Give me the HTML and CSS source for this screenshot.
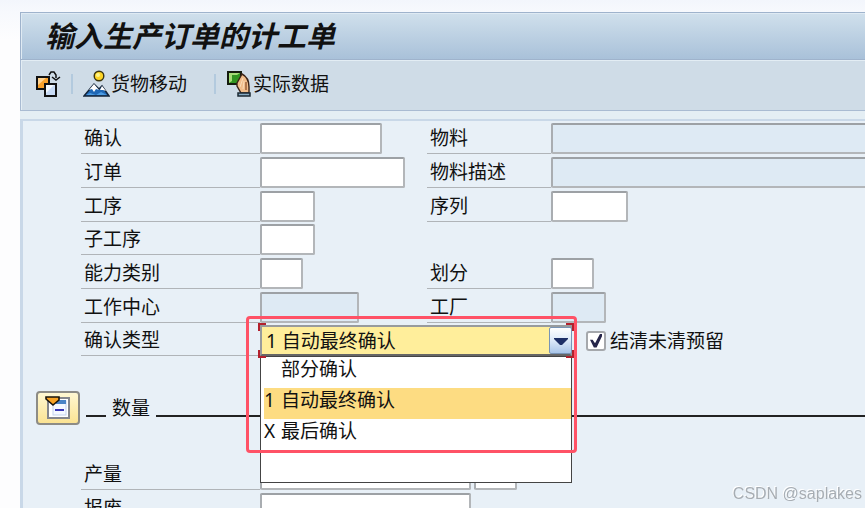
FILE: index.html
```html
<!DOCTYPE html>
<html lang="zh-CN">
<head>
<meta charset="utf-8">
<title>输入生产订单的计工单</title>
<link rel="stylesheet" href="styles.css">
</head>
<body>
<div class="window">
  <header class="titlebar"><h1>输入生产订单的计工单</h1></header>
  <nav class="toolbar" aria-label="工具栏">
    <button type="button" class="tool" aria-label="复制">
      <svg class="icon" width="26" height="28" viewBox="0 0 26 28">
        <rect x="2" y="7" width="12" height="12" fill="#f9a12b" stroke="#111" stroke-width="2"/>
        <path d="M3 8h8L3 15z" fill="#ffd391"/>
        <rect x="10" y="14" width="11" height="12" fill="#c9dcf6" stroke="#111" stroke-width="2"/>
        <path d="M11 15h8l-8 8z" fill="#f6faff"/>
        <path d="M14 5l2-3h3l2 3v3M17 7l4 3 4-3" fill="none" stroke="#111" stroke-width="1.5"/>
      </svg>
    </button>
    <span class="divider"></span>
    <button type="button" class="tool tool-move">
      <svg class="icon" width="27" height="28" viewBox="0 0 27 28">
        <path d="M1 26l10-12 5 5 3-3 7 10z" fill="#1f67b5" stroke="#14253a" stroke-width="1.5"/>
        <path d="M6 20l5-6 5 6-3-1-2 3-2-3zM17 20l2-4 4 5-3-1z" fill="#fff"/>
        <path d="M3 25l4-2 6 2 5-3 6 3z" fill="#4b9be2"/>
        <circle cx="16" cy="6" r="4.8" fill="#fdd426" stroke="#3b3510" stroke-width="1.4"/>
        <circle cx="15" cy="5" r="2" fill="#fff58a"/>
      </svg>
      <span>货物移动</span>
    </button>
    <span class="divider"></span>
    <button type="button" class="tool tool-data">
      <svg class="icon" width="26" height="28" viewBox="0 0 26 28">
        <rect x="2" y="2" width="13" height="12" fill="#319420" stroke="#151c0e" stroke-width="2"/>
        <path d="M3 3h11l-3 2H6v6l-3 2z" fill="#a5dc77"/>
        <path d="M11 13l5-9c4 2 7 7 7 13v6h-8l-4-7z" fill="#f1bd8b" stroke="#3b2316" stroke-width="1.4"/>
        <path d="M14 17l3-9M17 19l1-8" stroke="#fbdcb8" fill="none"/>
        <path d="M20 20v-8" stroke="#9b6038" fill="none" stroke-width="1.5"/>
        <path d="M12 23h12v3H12z" fill="#87abc2" stroke="#1b2933" stroke-width="1.5"/>
      </svg>
      <span>实际数据</span>
    </button>
  </nav>
  <main class="panel">
    <form class="form">
      <label class="caption" for="conf">确认</label>
      <div class="cell"><input class="field w-conf" id="conf" type="text"></div>
      <label class="caption" for="mat">物料</label>
      <div class="cell"><input class="field w-full" id="mat" type="text" readonly></div>

      <label class="caption" for="order">订单</label>
      <div class="cell"><input class="field w-order" id="order" type="text"></div>
      <label class="caption" for="desc">物料描述</label>
      <div class="cell"><input class="field w-full" id="desc" type="text" readonly></div>

      <label class="caption" for="op">工序</label>
      <div class="cell"><input class="field w-op" id="op" type="text"></div>
      <label class="caption" for="seq">序列</label>
      <div class="cell"><input class="field w-seq" id="seq" type="text"></div>

      <label class="caption" for="subop">子工序</label>
      <div class="cell cell-rest"><input class="field w-op" id="subop" type="text"></div>

      <label class="caption" for="cap">能力类别</label>
      <div class="cell"><input class="field w-short" id="cap" type="text"></div>
      <label class="caption" for="split">划分</label>
      <div class="cell"><input class="field w-short" id="split" type="text"></div>

      <label class="caption" for="center">工作中心</label>
      <div class="cell"><input class="field w-center" id="center" type="text" readonly></div>
      <label class="caption" for="plant">工厂</label>
      <div class="cell"><input class="field w-op" id="plant" type="text" readonly></div>

      <label class="caption" for="type">确认类型</label>
      <div class="cell cell-rest">
        <div class="combo">
          <select id="type">
            <option>部分确认</option>
            <option selected>1 自动最终确认</option>
            <option>X 最后确认</option>
          </select>
          <span class="arrow"><svg width="14" height="8" viewBox="0 0 14 8"><path d="M0 1h14v1L8 8H6L0 2z" fill="#1d2f66"/></svg></span>
          <ul class="menu">
            <li><span class="key"></span>部分确认</li>
            <li class="active"><span class="key">1</span>自动最终确认</li>
            <li><span class="key">X</span>最后确认</li>
          </ul>
          <span class="focus"></span>
          <span class="highlight"></span>
        </div>
        <label class="check"><input type="checkbox" checked><span>结清未清预留</span></label>
      </div>

      <div class="group">
        <button type="button" class="group-button" aria-label="折叠">
          <svg width="28" height="26" viewBox="0 0 28 26">
            <rect x="4" y="3" width="21" height="20" fill="#fff" stroke="#85878c" stroke-width="2"/>
            <rect x="9" y="6" width="13" height="14" fill="#f4f8ff" stroke="#c3d3ee"/>
            <rect x="12" y="5" width="10" height="4" fill="#4a84c6"/>
            <path d="M11 15h9" stroke="#3838b8" stroke-width="2"/>
            <path d="M2 2h13v3l-6 5-7-6z" fill="#f7a325" stroke="#17130a" stroke-width="1.6"/>
          </svg>
        </button>
        <span class="rule rule-start"></span>
        <h2>数量</h2>
        <span class="rule rule-end"></span>
      </div>

      <label class="caption" for="yield">产量</label>
      <div class="cell cell-rest">
        <input class="field w-qty" id="yield" type="text">
        <input class="field w-short" type="text" aria-label="单位">
      </div>
      <label class="caption" for="scrap">报废</label>
      <div class="cell cell-rest"><input class="field w-qty" id="scrap" type="text"></div>
    </form>
  </main>
</div>
<div class="watermark">CSDN @saplakes</div>
</body>
</html>
```
FILE: styles.css
```css
* { box-sizing: border-box; }

body {
  margin: 0;
  height: 100vh;
  overflow: hidden;
  background: linear-gradient(#f3f6fc, #f7f9fd 12px, #fdfdfe 40px);
  color: #111;
  font: 19px/28px "Noto Sans", "Noto Sans CJK SC", sans-serif;
}

button, input, select { font: inherit; color: inherit; }

.window {
  margin: 12px 0 0 20px;
  background: #e4eef4;
}

.titlebar {
  display: flex;
  align-items: center;
  height: 48px;
  padding: 0 0 4px 24px;
  border: solid #9fb3cc;
  border-width: 1px 0 1px 1px;
  background: linear-gradient(#d0e0ec, #a9c1d9);
  box-shadow: inset 1px 1px #dfeaf3;
}

h1 {
  margin: 0;
  font: italic 700 29px/40px "Noto Sans CJK SC", sans-serif;
}

.toolbar {
  display: flex;
  align-items: center;
  height: 51px;
  padding: 0 0 2px 14px;
  border: solid #a9bbd2;
  border-width: 0 0 1px 1px;
  background: #cfdce7;
  box-shadow: inset 1px 1px #e3edf4;
}

.tool {
  display: flex;
  align-items: center;
  gap: 1px;
  padding: 0;
  border: 0;
  background: none;
}

.icon { display: block; }
.divider { width: 2px; height: 20px; margin: 0 10px; background: #b3cade; }
.tool-move { margin-right: 17px; }

.panel {
  margin-top: 8px;
  border: solid #c9d8e8;
  border-width: 2px 0 0 3px;
  background: #e8f0f7;
}

.form {
  display: grid;
  grid-template-columns: 179px 167px 124px 1fr;
  grid-template-rows: repeat(2, 34px 34px 33px) 34px 100px 34px 34px;
  padding: 2px 0 0 58px;
}

.caption {
  height: 31px;
  padding-left: 3px;
  border-bottom: 1px solid #b0b4b8;
  line-height: 30px;
}

.cell { display: flex; align-items: flex-start; gap: 3px; }
.cell-rest { grid-column: 2 / -1; }

.field {
  height: 31px;
  padding: 0 4px;
  border: 2px solid #a9adb1;
  border-color: #9da1a5 #b3b6b9 #b3b6b9 #a9adb1;
  border-radius: 2px;
  background: #fff;
  outline: 0;
}
.field:read-only { background: #deeaf4; }

.w-conf { width: 122px; }
.w-order { width: 145px; }
.w-op { width: 55px; }
.w-seq { width: 77px; }
.w-short { width: 43px; }
.w-center { width: 99px; }
.w-qty { width: 211px; }
.w-full { width: 100%; border-right: 0; border-radius: 2px 0 0 2px; }

.combo {
  position: relative;
  display: flex;
  width: 312px;
  height: 31px;
}
.combo select {
  width: 100%;
  padding: 0 28px 0 4px;
  border: 2px solid #989b9d;
  border-bottom-color: #666;
  background: #ffee9b;
  appearance: none;
  outline: 0;
}
.arrow {
  position: absolute;
  top: 2px;
  right: 0;
  display: grid;
  place-items: center;
  width: 23px;
  height: 27px;
  border: 1px solid #7894b6;
  border-radius: 2px;
  background: linear-gradient(#fff, #dce9f8 50%, #a9c5e8);
  pointer-events: none;
}

.menu {
  position: absolute;
  z-index: 1;
  top: 31px;
  left: 0;
  width: 100%;
  height: 127px;
  margin: 0;
  padding: 0 0 0 3px;
  border: 1px solid #444;
  background: #fff;
  list-style: none;
}
.menu li { display: flex; height: 31px; line-height: 24px; }
.menu .active { background: #fddc82; }
.key { width: 17px; }

.focus {
  position: absolute;
  z-index: 2;
  inset: -2px;
  --c: #b3202c;
  background:
    linear-gradient(var(--c), var(--c)) 0 0 / 8px 2px,
    linear-gradient(var(--c), var(--c)) 0 0 / 2px 8px,
    linear-gradient(var(--c), var(--c)) 100% 0 / 8px 2px,
    linear-gradient(var(--c), var(--c)) 100% 0 / 2px 8px,
    linear-gradient(var(--c), var(--c)) 0 100% / 8px 2px,
    linear-gradient(var(--c), var(--c)) 0 100% / 2px 8px,
    linear-gradient(var(--c), var(--c)) 100% 100% / 8px 2px,
    linear-gradient(var(--c), var(--c)) 100% 100% / 2px 8px;
  background-repeat: no-repeat;
  pointer-events: none;
}

.highlight {
  position: absolute;
  z-index: 3;
  top: -9px;
  left: -14px;
  width: 331px;
  height: 137px;
  border: 3px solid #ff5266;
  border-radius: 4px;
  pointer-events: none;
}

.check { display: flex; align-items: center; gap: 4px; height: 31px; margin-left: 11px; }
.check input {
  width: 20px;
  height: 20px;
  margin: 0;
  border: 2px solid #a5a8ac;
  border-radius: 3px;
  background: #fff;
  appearance: none;
  display: grid;
  place-items: center;
}
.check input:checked::before {
  content: "";
  width: 12px;
  height: 14px;
  background: #25254a;
  clip-path: polygon(0 45%, 22% 45%, 42% 70%, 85% 0, 100% 0, 100% 20%, 55% 100%, 32% 100%);
}

.group {
  grid-column: 1 / -1;
  display: flex;
  align-items: flex-start;
  margin-left: -45px;
  padding-top: 32px;
}
.group-button {
  display: grid;
  place-items: center;
  width: 44px;
  height: 34px;
  padding: 0;
  border: 2px solid #8d8c86;
  border-radius: 4px;
  background: linear-gradient(#fff8d2, #fbe393);
}
.rule { height: 26px; border-bottom: 2px solid #222; }
.rule-start { width: 20px; margin-left: 6px; }
.rule-end { flex: 1; }
h2 { margin: 2px 6px; font-size: 19px; font-weight: 400; line-height: 30px; }

.watermark {
  position: fixed;
  right: 3px;
  bottom: 2px;
  color: #a7adb3;
  font: 16px/24px "Liberation Sans", sans-serif;
  text-shadow: -1px -1px #fff;
}
```
